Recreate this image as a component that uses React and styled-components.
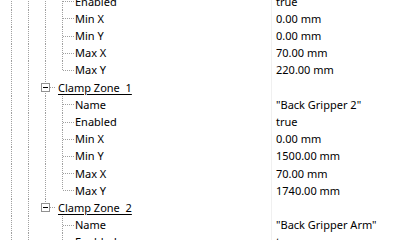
import React from "react";
import styled, { createGlobalStyle, css } from "styled-components";

const Global = createGlobalStyle`
  html, body { margin: 0; padding: 0; background: #fff; }
  body { font-family: "Noto Sans", "Open Sans", sans-serif; }
`;

const ROW_H = 17.2;
const LINE = "#a0a0a0";

const Viewport = styled.div`
  width: 400px;
  height: 240px;
  overflow: hidden;
  background: #fff;
`;

const List = styled.div`
  display: flex;
  flex-direction: column;
  margin-top: -7.4px;
`;

const Row = styled.div`
  display: flex;
  height: ${ROW_H}px;
  align-items: stretch;
`;

const TreeCell = styled.div`
  flex: 0 0 271px;
  display: flex;
  align-items: stretch;
  padding-left: 3px;
  box-sizing: border-box;
  overflow: hidden;
`;

const Divider = styled.div`
  flex: 0 0 1px;
  background: #f0f0f0;
`;

const ValueCell = styled.div`
  flex: 1;
  padding-left: 4px;
  display: flex;
  align-items: center;
  font-size: 11px;
  color: #000;
  white-space: pre;
`;

const vDots = `repeating-linear-gradient(to bottom, ${LINE} 0 1px, transparent 1px 2px)`;
const hDots = `repeating-linear-gradient(to right, ${LINE} 0 1px, transparent 1px 2px)`;

const Guide = styled.span`
  position: relative;
  flex: 0 0 ${(p) => p.$w || 17}px;
  display: flex;
  align-items: center;
  padding-left: 4px;
  box-sizing: border-box;

  &::before {
    content: "";
    position: absolute;
    left: 8px;
    width: 1px;
    background: ${vDots};
    ${(p) =>
      p.$kind === "pipe" || p.$kind === "tee" || p.$kind === "box"
        ? css`top: 0; bottom: 0;`
        : p.$kind === "ell" || p.$kind === "boxLast"
        ? css`top: 0; bottom: 50%;`
        : css`display: none;`}
  }

  &::after {
    content: "";
    position: absolute;
    top: 50%;
    height: 1px;
    background: ${hDots};
    ${(p) =>
      p.$kind === "tee" || p.$kind === "ell"
        ? css`left: 9px; right: 1px;`
        : p.$kind === "box" || p.$kind === "boxLast"
        ? css`left: 13px; right: 2px;`
        : css`display: none;`}
  }
`;

const Box = styled.span`
  position: relative;
  z-index: 1;
  width: 9px;
  height: 9px;
  box-sizing: border-box;
  border: 1px solid #919191;
  background: #fff;
  display: flex;
  align-items: center;
  justify-content: center;

  &::after {
    content: "";
    width: 5px;
    height: 1px;
    background: #000;
  }
`;

const Label = styled.span`
  display: flex;
  align-items: center;
  font-size: 11px;
  color: #000;
  white-space: pre;
  ${(p) =>
    p.$link &&
    css`
      text-decoration: underline;
      text-decoration-thickness: 1px;
      text-underline-offset: 2px;
    `}
`;

const rows = [
  { label: "Enabled", value: "true", g: ["pipe", "pipe", "pipe", "tee"] },
  { label: "Min X", value: "0.00 mm", g: ["pipe", "pipe", "pipe", "tee"] },
  { label: "Min Y", value: "0.00 mm", g: ["pipe", "pipe", "pipe", "tee"] },
  { label: "Max X", value: "70.00 mm", g: ["pipe", "pipe", "pipe", "tee"] },
  { label: "Max Y", value: "220.00 mm", g: ["pipe", "pipe", "pipe", "ell"] },
  { label: "Clamp Zone  1", value: "", g: ["pipe", "pipe", "box"], link: true },
  { label: "Name", value: "\"Back Gripper 2\"", g: ["pipe", "pipe", "pipe", "tee"] },
  { label: "Enabled", value: "true", g: ["pipe", "pipe", "pipe", "tee"] },
  { label: "Min X", value: "0.00 mm", g: ["pipe", "pipe", "pipe", "tee"] },
  { label: "Min Y", value: "1500.00 mm", g: ["pipe", "pipe", "pipe", "tee"] },
  { label: "Max X", value: "70.00 mm", g: ["pipe", "pipe", "pipe", "tee"] },
  { label: "Max Y", value: "1740.00 mm", g: ["pipe", "pipe", "pipe", "ell"] },
  { label: "Clamp Zone  2", value: "", g: ["pipe", "pipe", "boxLast"], link: true },
  { label: "Name", value: "\"Back Gripper Arm\"", g: ["pipe", "pipe", "blank", "tee"] },
  { label: "Enabled", value: "true", g: ["pipe", "pipe", "blank", "tee"] },
  { label: "Min X", value: "0.00 mm", g: ["pipe", "pipe", "blank", "tee"] },
];

function TreeRow({ row }) {
  const last = row.g.length - 1;
  return (
    <Row>
      <TreeCell>
        {row.g.map((k, i) => (
          <Guide key={i} $kind={k} $w={i === last ? 21 : 17}>
            {(k === "box" || k === "boxLast") && <Box />}
          </Guide>
        ))}
        <Label $link={row.link}>{row.label}</Label>
      </TreeCell>
      <Divider />
      <ValueCell>{row.value}</ValueCell>
    </Row>
  );
}

export default function App() {
  return (
    <Viewport>
      <Global />
      <List>
        {rows.map((r, i) => (
          <TreeRow key={i} row={r} />
        ))}
      </List>
    </Viewport>
  );
}
